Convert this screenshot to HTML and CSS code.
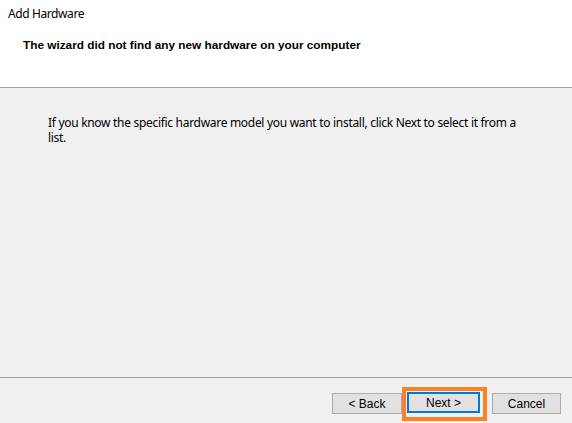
FILE: index.html
```html
<!DOCTYPE html>
<html>
<head>
<meta charset="utf-8">
<link rel="stylesheet" href="styles.css">
</head>
<body>
<div class="wizard">
  <div class="header">
    <div class="title">Add Hardware</div>
    <div class="heading">The wizard did not find any new hardware on your computer</div>
  </div>
  <div class="content">
    <p class="message">If you know the specific hardware model you want to install, click Next to select it from a list.</p>
  </div>
  <div class="footer">
    <button class="btn btn-back">&lt; Back</button>
    <span class="highlight"><button class="btn btn-next">Next &gt;</button></span>
    <button class="btn btn-cancel">Cancel</button>
  </div>
</div>
</body>
</html>
```
FILE: styles.css
```css
html, body {
  margin: 0;
  padding: 0;
}
body {
  width: 572px;
  height: 423px;
  background: #f0f0f0;
  overflow: hidden;
}
.wizard {
  display: flex;
  flex-direction: column;
  width: 572px;
  height: 423px;
}
.header {
  height: 87px;
  background: #ffffff;
  border-bottom: 1px solid #a0a0a0;
  box-sizing: content-box;
}
.title {
  font-family: "Noto Sans", sans-serif;
  font-size: 12px;
  letter-spacing: -0.4px;
  color: #000;
  padding: 5px 0 0 8px;
  line-height: 17px;
}
.heading {
  font-family: "Liberation Sans", Arial, sans-serif;
  font-weight: bold;
  font-size: 11.8px;
  color: #000;
  padding: 16px 0 0 23px;
  line-height: 14px;
}
.content {
  flex: 1;
  padding: 27px 0 0 48px;
}
.message {
  margin: 0;
  width: 480px;
  font-family: "Noto Sans", sans-serif;
  font-size: 12px;
  letter-spacing: -0.3px;
  line-height: 15px;
  color: #000;
}
.footer {
  height: 45px;
  border-top: 1px solid #a0a0a0;
  display: flex;
  justify-content: flex-end;
  align-items: flex-start;
  padding-right: 11px;
}
.btn {
  font-family: "Liberation Sans", Arial, sans-serif;
  font-size: 12px;
  color: #000;
  background: #e1e1e1;
  border: 1px solid #adadad;
  height: 21px;
  padding: 0;
  box-sizing: border-box;
  margin: 0;
}
.btn-back {
  width: 70px;
  margin-top: 15px;
}
.highlight {
  display: flex;
  margin-top: 9px;
  border: 4px solid #ff7f27;
  padding: 1px 3px 4px 1px;
}
.btn-next {
  width: 73px;
  border: 2px solid #0078d7;
}
.btn-cancel {
  width: 69px;
  margin-top: 15px;
  margin-left: 5px;
}
```
